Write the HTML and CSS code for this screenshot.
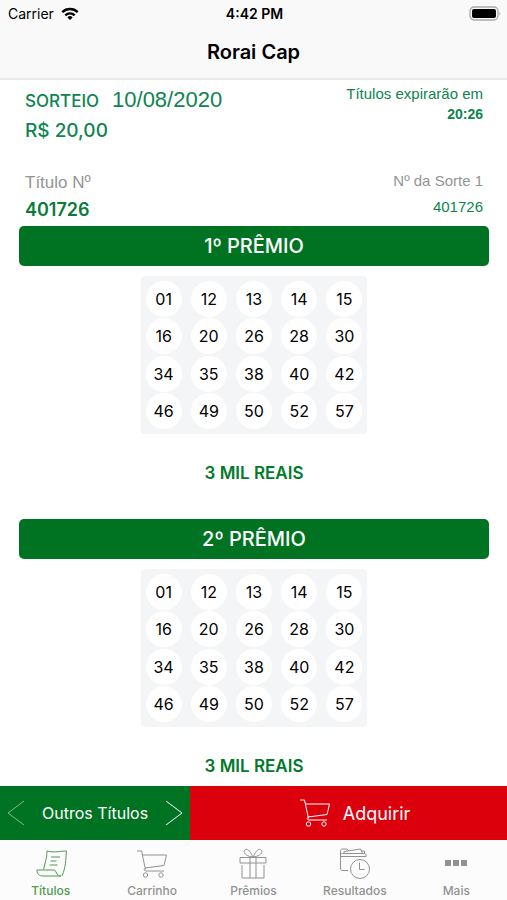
FILE: index.html
```html
<!DOCTYPE html>
<html lang="pt-BR">
<head>
    <meta charset="UTF-8">
    <meta name="viewport" content="width=device-width, initial-scale=1.0">
    <title>Rorai Cap</title>
    <link rel="stylesheet" href="styles.css">
</head>
<body>
    <svg class="sprite" aria-hidden="true">
        <symbol id="cart" viewBox="0 0 32 28">
            <path d="M1 1h4.500l4 18.500M6 5h24.500l-2.500 10.500-19 2.500M9.500 18c-2 1-1.500 3 .5 3h18"/>
            <circle cx="9.500" cy="25" r="2.200"/>
            <circle cx="25" cy="25" r="2.200"/>
        </symbol>
    </svg>

    <header class="header">
        <div class="status-bar">
            <div class="carrier">
                <span>Carrier</span>
                <svg width="18" height="14" viewBox="0 0 18 14" fill="none" stroke="#000" stroke-width="2.400">
                    <path d="M1.300 5.200a11 11 0 0 1 15.400 0M4.300 8.300a6.700 6.700 0 0 1 9.400 0"/>
                    <path d="M6.400 10.400a3.700 3.700 0 0 1 5.200 0L9 13z" fill="#000" stroke="none"/>
                </svg>
            </div>
            <div class="clock">4:42 PM</div>
            <div class="battery">
                <svg width="32" height="16" viewBox="0 0 32 16">
                    <rect x="1" y="1" width="28" height="13" rx="4" fill="none" stroke="#aaa" stroke-width="1.300"/>
                    <rect x="3" y="3" width="24" height="9" rx="2"/>
                    <path d="M30.500 5.500q1.500 2 0 4z" fill="#999"/>
                </svg>
            </div>
        </div>
        <h1>Rorai Cap</h1>
    </header>

    <main class="content">
        <div class="info">
            <div>
                <div class="draw"><strong>SORTEIO</strong> <span class="date">10/08/2020</span></div>
                <div class="value">R$ 20,00</div>
            </div>
            <div class="expire">
                <div>Títulos expirarão em</div>
                <strong>20:26</strong>
            </div>
        </div>
        <div class="info">
            <div>
                <div class="label">Título Nº</div>
                <div class="value">401726</div>
            </div>
            <div class="lucky">
                <div class="label">Nº da Sorte 1</div>
                <div>401726</div>
            </div>
        </div>

        <section class="prize">
            <h2>1º PRÊMIO</h2>
            <ul class="numbers">
                <li>01</li><li>12</li><li>13</li><li>14</li><li>15</li>
                <li>16</li><li>20</li><li>26</li><li>28</li><li>30</li>
                <li>34</li><li>35</li><li>38</li><li>40</li><li>42</li>
                <li>46</li><li>49</li><li>50</li><li>52</li><li>57</li>
            </ul>
            <p>3 MIL REAIS</p>
        </section>
        <section class="prize">
            <h2>2º PRÊMIO</h2>
            <ul class="numbers">
                <li>01</li><li>12</li><li>13</li><li>14</li><li>15</li>
                <li>16</li><li>20</li><li>26</li><li>28</li><li>30</li>
                <li>34</li><li>35</li><li>38</li><li>40</li><li>42</li>
                <li>46</li><li>49</li><li>50</li><li>52</li><li>57</li>
            </ul>
            <p>3 MIL REAIS</p>
        </section>
    </main>

    <div class="actions">
        <div class="others">
            <button class="arrow prev" aria-label="Anterior">
                <svg width="18" height="28" viewBox="0 0 18 28"><path d="M17 2 1 14l16 12"/></svg>
            </button>
            <span>Outros Títulos</span>
            <button class="arrow" aria-label="Próximo">
                <svg width="18" height="28" viewBox="0 0 18 28"><path d="M1 2l16 12L1 26"/></svg>
            </button>
        </div>
        <button class="buy">
            <svg width="32" height="28"><use href="#cart"/></svg>
            <span>Adquirir</span>
        </button>
    </div>

    <nav class="tabs">
        <a href="#titulos" class="active">
            <svg width="32" height="32" viewBox="0 0 32 32">
                <path d="M12 4c7 2 13 0 19.500 0-1 9-.5 16-4.500 25M12 4c0 7-2 12-3.500 18.500M2 23h17.500c1.500 0 1.500 6 6.500 6H8c-4 0-6-2-6-6zM16 10h9M15.500 14h6M14.500 18h8"/>
            </svg>
            <span>Títulos</span>
        </a>
        <a href="#carrinho">
            <svg width="32" height="32" viewBox="0 -3 32 32"><use href="#cart" width="32" height="28"/></svg>
            <span>Carrinho</span>
        </a>
        <a href="#premios">
            <svg width="32" height="32" viewBox="0 0 32 32">
                <path d="M3 10.500h26v5.500H3zM5 18v13h22V18M13 10.500V31M19 10.500V31M16 10C14 6 11 1 8.500 2.500 5 5 9 9.500 16 10c7-.5 11-5 7.500-7.500C21 1 18 6 16 10"/>
            </svg>
            <span>Prêmios</span>
        </a>
        <a href="#resultados">
            <svg width="32" height="32" viewBox="0 0 32 32">
                <path d="M9 23.500H4c-2 0-2.500-1-2.500-2.500V4c0-1 .5-2 2-2H8l2 2M1.500 9.500H27V8c0-1-.5-1.500-1.500-1.500H3.500c-1 0-2 .5-2 2M5 6.500V4.500L21.500 2l2 4.500M22 4h3.500v2.500"/>
                <circle cx="21" cy="22" r="9.500"/>
                <path d="M20.500 15.500V22.500h5"/>
            </svg>
            <span>Resultados</span>
        </a>
        <a href="#mais">
            <svg class="dots" width="32" height="32" viewBox="0 0 32 32">
                <path d="M5 13h6v6H5zM13 13h6v6h-6zM21 13h6v6h-6z"/>
            </svg>
            <span>Mais</span>
        </a>
    </nav>
</body>
</html>
```
FILE: styles.css
```css
* {
    box-sizing: border-box;
}
body {
    margin: 0;
    height: 100vh;
    display: flex;
    flex-direction: column;
    background-color: #fff;
    color: #000;
    font-family: "Liberation Sans", Arial, sans-serif;
}
.sprite {
    position: absolute;
    width: 0;
    height: 0;
}
svg {
    flex-shrink: 0;
}
button {
    border: none;
    background: none;
    padding: 0;
    color: inherit;
    font: inherit;
    cursor: pointer;
}

/* header */
.header {
    background-color: #f9f9f9;
    border-bottom: 2px solid #ebebeb;
    font-family: Inter, sans-serif;
}
.status-bar {
    display: grid;
    grid-template-columns: 1fr auto 1fr;
    align-items: center;
    height: 27px;
    padding: 0 6px 0 8px;
    font-size: 14px;
}
.carrier {
    display: flex;
    align-items: center;
    gap: 7px;
}
.clock {
    font-weight: 600;
}
.battery {
    display: flex;
    justify-content: flex-end;
}
h1 {
    margin: 0;
    font-size: 20px;
    font-weight: 600;
    line-height: 51px;
    text-align: center;
}

/* ticket */
.content {
    flex: 1;
    min-height: 0;
    overflow-y: auto;
    padding: 4px 18px 0 19px;
}
.info {
    display: flex;
    justify-content: space-between;
    padding: 0 6px;
    margin-bottom: 25px;
    color: #0e8450;
}
.info + .info {
    margin-bottom: 2px;
}
.draw {
    display: flex;
    align-items: baseline;
    gap: 13px;
    line-height: 32px;
    font-size: 17px;
}
.draw strong {
    font-family: Inter, sans-serif;
    font-weight: 500;
}
.date {
    font-size: 22px;
}
.value {
    font-family: Inter, sans-serif;
    font-size: 19px;
    font-weight: 500;
    line-height: 28px;
}
.info + .info .value {
    color: #087c38;
    font-weight: 600;
    font-size: 18px;
}
.label {
    color: #949494;
    font-size: 17px;
    line-height: 26px;
}
.expire {
    text-align: right;
    font-size: 15px;
    line-height: 20px;
}
.expire strong {
    font-size: 14px;
}
.lucky {
    text-align: right;
    font-size: 15px;
    line-height: 30px;
}
.lucky .label {
    font-size: 15px;
    line-height: 22px;
}

/* prizes */
.prize {
    margin-bottom: 33px;
}
.prize:last-child {
    margin-bottom: 0;
}
.prize h2 {
    margin: 0 0 10px;
    border-radius: 5px;
    background-color: #007323;
    color: #fff;
    font-size: 20px;
    font-weight: 500;
    font-family: Inter, sans-serif;
    line-height: 40px;
    text-align: center;
}
.numbers {
    display: grid;
    grid-template-columns: repeat(5, 1fr);
    grid-template-rows: repeat(4, 1fr);
    place-items: center;
    width: 226px;
    height: 158px;
    margin: 0 auto;
    padding: 4px 0;
    border-radius: 4px;
    background-color: #f3f5f6;
    list-style: none;
    font-family: Inter, sans-serif;
    font-size: 16px;
}
.numbers li {
    width: 36px;
    border-radius: 50%;
    background-color: #fff;
    line-height: 36px;
    text-align: center;
}
.prize p {
    margin: 0;
    padding-top: 26px;
    color: #007a2b;
    font-family: Inter, sans-serif;
    font-size: 17px;
    font-weight: 600;
    line-height: 26px;
    text-align: center;
}

/* bottom */
.actions {
    display: flex;
    height: 54px;
    color: #fff;
    font-family: Inter, sans-serif;
    font-size: 16px;
}
.others {
    width: 37.5%;
    display: flex;
    justify-content: space-between;
    align-items: center;
    padding: 0 7px;
    background-color: #007323;
}
.arrow {
    display: flex;
}
.prev {
    opacity: 0.5;
}
.buy {
    flex: 1;
    display: flex;
    justify-content: center;
    align-items: center;
    gap: 12px;
    padding-left: 12px;
    background-color: #dc000d;
    font-size: 18px;
}
.tabs {
    display: grid;
    grid-template-columns: repeat(5, 1fr);
    height: 60px;
    padding-top: 7px;
    background-color: #fcfcfc;
}
.tabs a {
    display: flex;
    flex-direction: column;
    align-items: center;
    gap: 4px;
    color: #929292;
    font-family: Inter, sans-serif;
    font-size: 12px;
    font-weight: 500;
    line-height: 16px;
    text-decoration: none;
}
.tabs .active {
    color: #4f9b4f;
}
.actions svg, .tabs svg {
    fill: none;
    stroke: currentColor;
    stroke-linejoin: round;
}
.tabs .dots {
    fill: currentColor;
    stroke: none;
}
```
